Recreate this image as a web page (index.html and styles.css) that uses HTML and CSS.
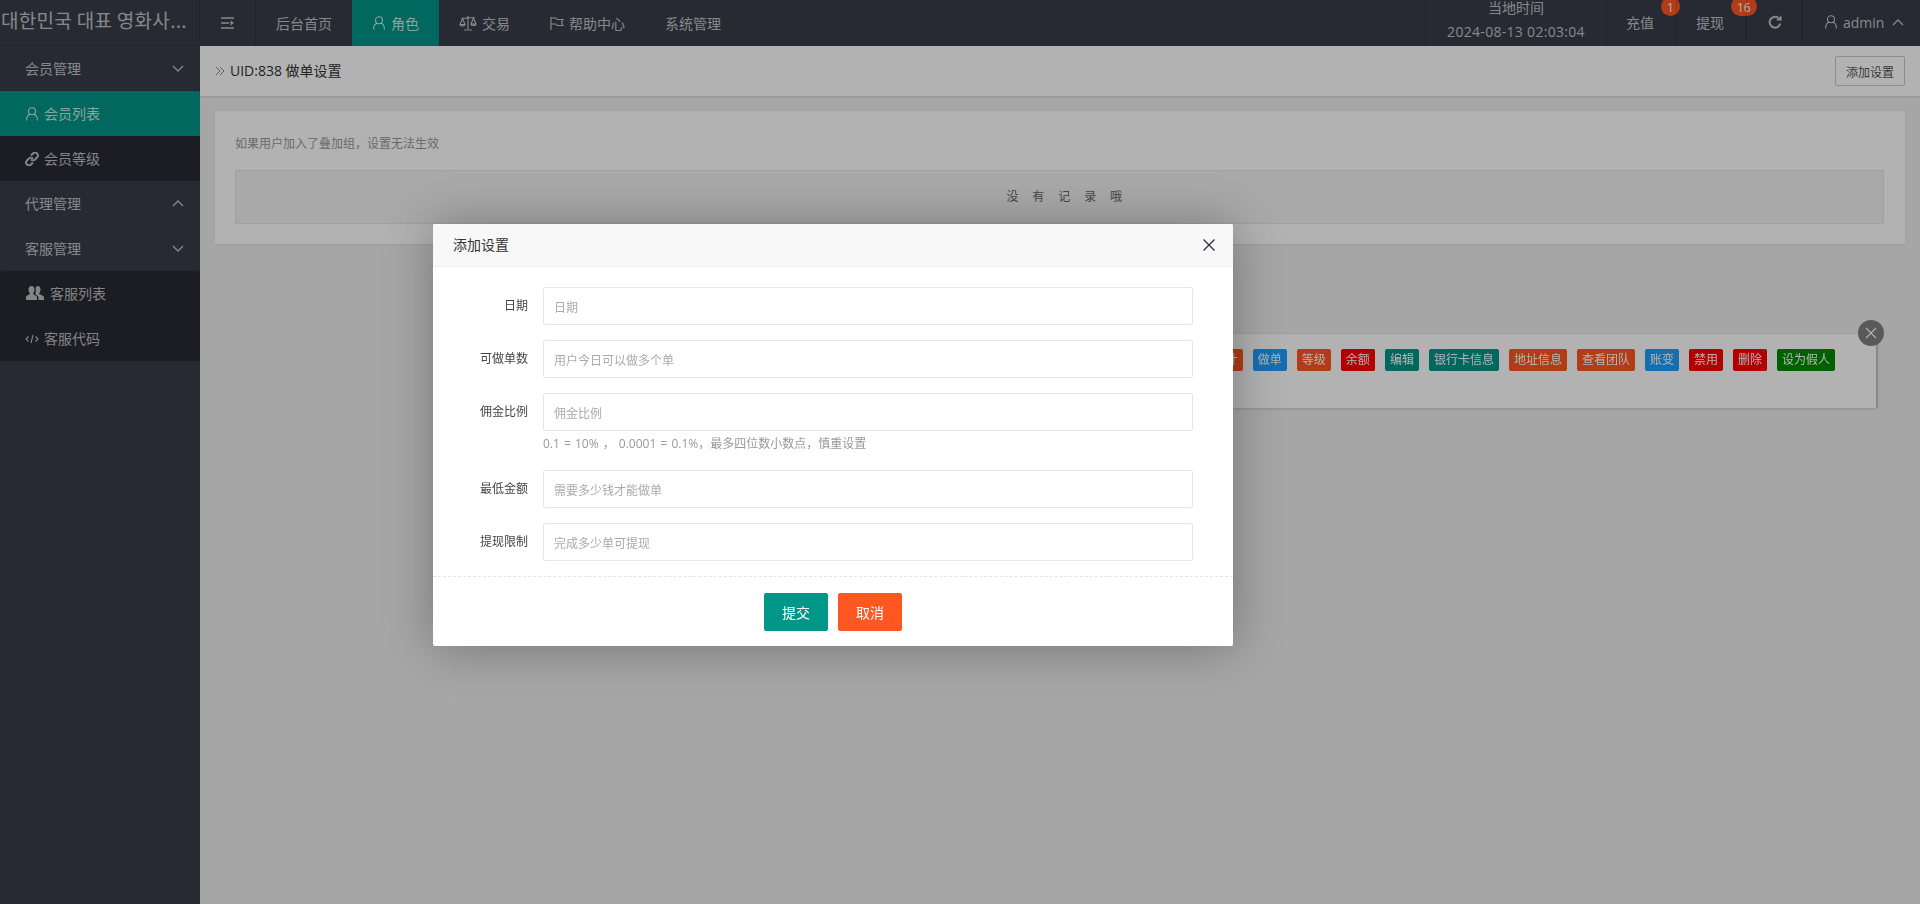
FILE: index.html
```html
<!DOCTYPE html>
<html lang="zh">
<head>
<meta charset="utf-8">
<title>UID:838 做单设置</title>
<link rel="stylesheet" href="styles.css">
</head>
<body>
<header class="topbar">
  <div class="logo">대한민국 대표 영화사...</div>
  <nav class="topnav">
    <a class="tn tn-toggle"><svg class="ic-toggle" viewBox="0 0 14 12"><path d="M0 1h13M0 6h8M0 11h13"/><path class="fill" d="M9.500 3.500 13 6l-3.500 2.500z"/></svg></a>
    <a class="tn tn-first">后台首页</a>
    <a class="tn tn-active"><svg class="ic14" viewBox="0 0 14 14"><circle cx="7" cy="4.300" r="3.500"/><path d="M1.600 13.500c0-3.400 1.600-5.700 3.400-6.200M12.400 13.500c0-3.400-1.600-5.700-3.400-6.200"/></svg>角色</a>
    <a class="tn"><svg class="ic18" viewBox="0 0 18 16"><path d="M9 1v13M5 15h8M2.500 3.500 15.500 2.500M3.500 3.500 1 9.500h5zM14.500 3 12 9h5zM1 9.500c.5 2 4.500 2 5 0M12 9c.5 2 4.500 2 5 0"/></svg>交易</a>
    <a class="tn"><svg class="ic14" viewBox="0 0 14 14"><path d="M1 1v13M1 2h5l1 1.500h6l-1.500 3 1.500 3H7L6 8H1"/></svg>帮助中心</a>
    <a class="tn">系统管理</a>
  </nav>
  <div class="topright">
    <div class="tr tr-time"><span>当地时间</span><span class="clock">2024-08-13 02:03:04</span></div>
    <a class="tr tr-money">充值<i class="badge badge-one">1</i></a>
    <a class="tr tr-money">提现<i class="badge badge-two">16</i></a>
    <a class="tr tr-refresh"><svg class="ic-refresh" viewBox="0 0 14 14"><path d="M12.300 8.500A5.400 5.400 0 1 1 10.300 2.900"/><path class="fill" d="M8 5.300 13.500 5.800V.3z"/></svg></a>
    <a class="tr tr-user"><svg class="ic14" viewBox="0 0 14 14"><circle cx="7" cy="4.300" r="3.500"/><path d="M1.600 13.500c0-3.400 1.600-5.700 3.400-6.200M12.400 13.500c0-3.400-1.600-5.700-3.400-6.200"/></svg><span class="uname">admin</span><svg class="chev" viewBox="0 0 12 7"><path d="M1 6l5-5 5 5"/></svg></a>
  </div>
</header>
<div class="main">
  <aside class="sidebar">
    <div class="side-title"><span>会员管理</span><svg class="chev" viewBox="0 0 12 7"><path d="M1 1l5 5 5-5"/></svg></div>
    <div class="side-sub">
      <a class="side-item side-active"><svg class="ic14" viewBox="0 0 14 14"><circle cx="7" cy="4.300" r="3.500"/><path d="M1.600 13.500c0-3.400 1.600-5.700 3.400-6.200M12.400 13.500c0-3.400-1.600-5.700-3.400-6.200"/></svg>会员列表</a>
      <a class="side-item"><svg class="ic14 thick" viewBox="0 0 14 14"><path d="M6 3.500 8 1.500a2.800 2.800 0 0 1 4 4L10 7.500a2.800 2.800 0 0 1-4 0M8 10.500 6 12.500a2.800 2.800 0 0 1-4-4L4 6.500a2.800 2.800 0 0 1 4 0"/></svg>会员等级</a>
    </div>
    <div class="side-title"><span>代理管理</span><svg class="chev" viewBox="0 0 12 7"><path d="M1 6l5-5 5 5"/></svg></div>
    <div class="side-title"><span>客服管理</span><svg class="chev" viewBox="0 0 12 7"><path d="M1 1l5 5 5-5"/></svg></div>
    <div class="side-sub">
      <a class="side-item side-wide"><svg class="ic18" viewBox="0 0 18 14"><path class="fill" d="M5.500 0c2 0 3 1.500 3 3.500S7.500 7 7 7.500c0 1 3 1.500 4 3.500v3H0v-3c1-2 4-2.500 4-3.500C3.500 7 2.500 5.500 2.500 3.500S3.500 0 5.500 0z"/><path class="fill" d="M11.500 0c2 0 3 1.500 3 3.500S13.500 7 13 7.500c0 1 4 1.500 5 3.500v3h-5.500v-2.800C11.500 9.500 9.800 8.200 9.300 7.900 9.800 6.500 10 4.500 9.700 2.800 9.500 1.500 10.500 0 11.500 0z"/></svg>客服列表</a>
      <a class="side-item"><svg class="ic14" viewBox="0 0 14 14"><path d="M3.500 4.500 1 7l2.500 2.500M10.500 4.500 13 7l-2.500 2.500M8 3 6 11"/></svg>客服代码</a>
    </div>
  </aside>
  <main class="content">
    <div class="crumb">
      <div class="crumb-text"><svg class="crumb-ic" viewBox="0 0 10 10"><path d="M1 1l4 4-4 4M5 1l4 4-4 4"/></svg>UID:838 做单设置</div>
      <button class="btn-line">添加设置</button>
    </div>
    <section class="card">
      <p class="card-tip">如果用户加入了叠加组，设置无法生效</p>
      <div class="empty">没 有 记 录 哦</div>
    </section>
  </main>
</div>

<div class="layer-tags">
  <div class="tags">
    <span class="tag tag-o">统计</span><span class="tag tag-b">做单</span><span class="tag tag-o">等级</span><span class="tag tag-r">余额</span><span class="tag tag-t">编辑</span><span class="tag tag-t">银行卡信息</span><span class="tag tag-o">地址信息</span><span class="tag tag-o">查看团队</span><span class="tag tag-b">账变</span><span class="tag tag-r">禁用</span><span class="tag tag-r">删除</span><span class="tag tag-g">设为假人</span>
  </div>
  <a class="tags-close"><svg viewBox="0 0 12 12"><path d="M1 1l10 10M11 1 1 11"/></svg></a>
</div>

<div class="shade"></div>

<div class="dialog">
  <div class="dlg-head"><span>添加设置</span><a class="dlg-close"><svg viewBox="0 0 12 12"><path d="M.5.500l11 11M11.500.500l-11 11"/></svg></a></div>
  <form class="dlg-form">
    <div class="row"><label class="lab">日期</label><input class="inp" placeholder="日期"></div>
    <div class="row"><label class="lab">可做单数</label><input class="inp" placeholder="用户今日可以做多个单"></div>
    <div class="row row-help"><label class="lab">佣金比例</label><div class="inp-wrap"><input class="inp" placeholder="佣金比例"><div class="help">0.1 = 10% ， 0.0001 = 0.1%，最多四位数小数点，慎重设置</div></div></div>
    <div class="row"><label class="lab">最低金额</label><input class="inp" placeholder="需要多少钱才能做单"></div>
    <div class="row"><label class="lab">提现限制</label><input class="inp" placeholder="完成多少单可提现"></div>
  </form>
  <div class="dlg-foot"><button class="btn btn-ok">提交</button><button class="btn btn-cancel">取消</button></div>
</div>
</body>
</html>
```

FILE: styles.css
```css
* { box-sizing: border-box; }
html, body { height: 100%; }
body {
  margin: 0;
  height: 904px;
  overflow: hidden;
  display: flex;
  flex-direction: column;
  background: #eee;
  color: #333;
  font: 14px/1.5 "Open Sans", "Noto Sans CJK SC", sans-serif;
}
a { color: inherit; text-decoration: none; }
svg { fill: none; stroke: currentColor; stroke-width: 1.1; flex: none; }
svg .fill { fill: currentColor; stroke: none; }
.thick { stroke-width: 1.9; }
.ic14 { width: 14px; height: 14px; margin-right: 5px; }
.ic18 { width: 18px; height: 16px; margin-right: 5px; }
.ic-toggle { width: 14px; height: 12px; stroke-width: 1.7; }
.ic-refresh { width: 14px; height: 14px; stroke-width: 2; }

.topbar {
  height: 46px;
  flex: none;
  display: flex;
  background: #393d49;
  color: rgba(255, 255, 255, .7);
}
.logo {
  width: 200px;
  flex: none;
  padding-left: 1px;
  border-right: 1px solid rgba(0, 0, 0, .12);
  border-bottom: 1px solid rgba(0, 0, 0, .12);
  font: 19px/40px "Noto Sans CJK KR", sans-serif;
  letter-spacing: .3px;
  white-space: nowrap;
  overflow: hidden;
}
.topnav { display: flex; flex: 1; }
.tn { display: flex; align-items: center; padding: 0 20px; }
.tn-toggle { width: 56px; justify-content: center; padding: 0; border-right: 1px solid rgba(0, 0, 0, .15); }
.tn-first { width: 96px; }
.tn-active { width: 87px; background: #009688; color: rgba(255, 255, 255, .8); }
.topright { display: flex; }
.tr {
  position: relative;
  display: flex;
  align-items: center;
  justify-content: center;
  padding-bottom: 2px;
  border-left: 1px solid rgba(0, 0, 0, .15);
}
.tr-time { width: 181px; flex-direction: column; padding-bottom: 6px; line-height: 24px; }
.clock { letter-spacing: .3px; }
.tr-money { width: 70px; padding-right: 3px; }
.tr-refresh { width: 56px; }
.tr-refresh svg { margin-right: 0; }
.tr-user { width: 118px; justify-content: flex-start; padding-left: 21px; }
.uname { margin-right: 8px; }
.badge {
  position: absolute;
  top: -3px;
  height: 19px;
  min-width: 19px;
  padding: 0 6px;
  border-radius: 10px;
  background: #ff5722;
  color: #fff;
  font: 12px/22px "Open Sans", sans-serif;
  text-align: center;
}
.badge-one { left: 54px; padding: 0; }
.badge-two { left: 54px; }
.chev { width: 12px; height: 7px; stroke-width: 1.3; }

.main { flex: 1; display: flex; min-height: 0; }
.sidebar {
  width: 200px;
  flex: none;
  background: #393d49;
  color: rgba(255, 255, 255, .7);
}
.side-title {
  height: 45px;
  display: flex;
  align-items: center;
  justify-content: space-between;
  padding: 1px 16px 0 25px;
  border-bottom: 1px solid rgba(0, 0, 0, .08);
}
.side-title .chev { margin-top: -1px; }
.side-sub { background: rgba(0, 0, 0, .3); border-radius: 2px; }
.side-item { height: 45px; display: flex; align-items: center; padding-left: 25px; }
.side-active { background: #009688; color: rgba(255, 255, 255, .8); }
.side-item.side-wide .ic18 { margin: -2px 6px 0 1px; }

.content { flex: 1; min-width: 0; }
.crumb {
  height: 50px;
  display: flex;
  align-items: center;
  justify-content: space-between;
  padding: 0 15px;
  background: #fff;
  box-shadow: 0 1px 2px rgba(0, 0, 0, .12);
}
.crumb-text { display: flex; align-items: center; margin-top: -2px; }
.crumb-ic { width: 10px; height: 10px; margin: 2px 5px 0 0; color: #888; stroke-width: 1; }
.btn-line {
  width: 70px;
  height: 30px;
  padding: 0;
  border: 1px solid #c9c9c9;
  border-radius: 2px;
  background: #fff;
  color: #555;
  font: 12px "Noto Sans CJK SC", sans-serif;
}
.card {
  margin: 15px 15px 0;
  padding: 20px 21px 20px 20px;
  background: #fff;
  box-shadow: 0 1px 2px rgba(0, 0, 0, .05);
}
.card-tip { margin: 0 0 15px; padding-top: 1px; height: 24px; color: #999; font-size: 12px; line-height: 24px; }
.empty {
  height: 54px;
  padding-left: 15px;
  border: 1px solid #e6e6e6;
  background: #f2f2f2;
  color: #666;
  font-size: 12px;
  line-height: 52px;
  letter-spacing: 5.4px;
  text-align: center;
}

.layer-tags {
  position: absolute;
  left: 1100px;
  top: 334px;
  width: 776px;
  height: 74px;
  padding: 15px 41px 0 0;
  background: #fff;
  box-shadow: 1px 1px 3px rgba(0, 0, 0, .12), 2px 0 1px rgba(0, 0, 0, .12);
}
.tags { display: flex; justify-content: flex-end; gap: 10px; filter: blur(.35px); }
.tag {
  height: 22px;
  padding: 0 5px;
  border-radius: 2px;
  color: #fff;
  font-size: 12px;
  line-height: 22px;
  white-space: nowrap;
}
.tag-o { background: #ff5722; }
.tag-b { background: #1e9fff; }
.tag-r { background: #ff0000; }
.tag-t { background: #009688; }
.tag-g { background: #008a00; }
.tags-close {
  position: absolute;
  right: -8px;
  top: -14px;
  width: 26px;
  height: 26px;
  display: flex;
  align-items: center;
  justify-content: center;
  border-radius: 50%;
  background: #808080;
  color: #fff;
}
.tags-close svg { width: 12px; height: 12px; }

.shade { position: fixed; inset: 0; background: rgba(0, 0, 0, .3); }

.dialog {
  position: absolute;
  left: 433px;
  top: 224px;
  width: 800px;
  height: 422px;
  background: #fff;
  border-radius: 2px;
  box-shadow: 1px 1px 50px rgba(0, 0, 0, .3);
  font-size: 12px;
}
.dlg-head {
  height: 43px;
  display: flex;
  align-items: center;
  justify-content: space-between;
  padding: 0 18px 2px 20px;
  background: #f8f8f8;
  border-bottom: 1px solid #eee;
  border-radius: 2px 2px 0 0;
  font-size: 14px;
}
.dlg-close { display: flex; margin-top: 2px; color: #2e2d3c; }
.dlg-close svg { width: 12px; height: 12px; stroke-width: 1.3; }
.dlg-form { padding: 20px 40px 0 0; height: 310px; border-bottom: 1px dashed #e6e6e6; }
.row { display: flex; align-items: center; margin-bottom: 15px; }
.row-help { align-items: flex-start; }
.row-help .lab { line-height: 38px; padding-top: 0; }
.lab { width: 110px; flex: none; padding: 0 15px 0 0; text-align: right; color: #444; }
.inp-wrap { flex: 1; min-width: 0; }
.inp {
  display: block;
  flex: 1;
  width: 100%;
  height: 38px;
  padding: 2px 10px 0;
  border: 1px solid #e6e6e6;
  border-radius: 2px;
  background: #fff;
  color: #333;
  font: 12px "Open Sans", "Noto Sans CJK SC", sans-serif;
  outline: 0;
}
.inp::placeholder { color: #aaa; }
.help { padding-top: 1px; height: 24px; color: #999; line-height: 24px; word-spacing: 1px; }
.dlg-foot { display: flex; justify-content: center; gap: 10px; padding-top: 16px; }
.btn {
  height: 38px;
  padding: 0 18px;
  border: 0;
  border-radius: 2px;
  color: #fff;
  font: 14px "Noto Sans CJK SC", sans-serif;
}
.btn-ok { background: #009688; }
.btn-cancel { background: #ff5722; }
```
